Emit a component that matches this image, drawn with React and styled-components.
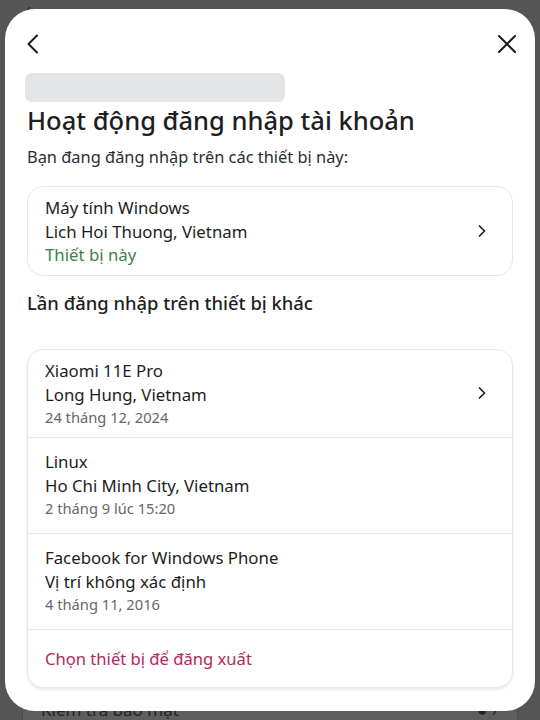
import React from "react";
import styled, { createGlobalStyle } from "styled-components";

const GlobalStyle = createGlobalStyle`
  * { box-sizing: border-box; }
  html, body {
    margin: 0;
    padding: 0;
    background: #585858;
  }
  body {
    font-family: "Noto Sans", Roboto, "Liberation Sans", sans-serif;
    color: #1c1e21;
  }
`;

// page that sits behind the dim overlay
const Backdrop = styled.div`
  position: relative;
  width: 540px;
  height: 720px;
  overflow: hidden;
  background: #555555;
  display: flex;
  flex-direction: column;
  justify-content: space-between;
`;

const BehindTop = styled.div`
  height: 10px;
  padding-left: 22px;
  color: #2a2a2a;
`;

const BehindCard = styled.div`
  margin: 0 22px;
  height: 24px;
  background: #5e5e5e;
  border-left: 1px solid #4c4c4c;
  border-right: 1px solid #4c4c4c;
  display: flex;
  align-items: flex-start;
  justify-content: space-between;
  padding: 0 20px 0 18px;
  font-size: 17px;
  color: #222;
  line-height: 28px;
`;

const Modal = styled.div`
  position: absolute;
  top: 9px;
  left: 5px;
  right: 5px;
  bottom: 9px;
  background: #ffffff;
  border-radius: 30px;
  padding: 0 22px;
  display: flex;
  flex-direction: column;
  overflow: hidden;
`;

const Header = styled.div`
  margin: 23px -6px 0 -6px;
  height: 24px;
  display: flex;
  justify-content: space-between;
  align-items: center;
`;

const IconButton = styled.button`
  width: 24px;
  height: 24px;
  padding: 0;
  border: none;
  background: none;
  display: flex;
  align-items: center;
  justify-content: center;
  color: #1c1e21;
`;

const Placeholder = styled.div`
  margin: 17px 0 0 -2px;
  width: 260px;
  height: 29px;
  border-radius: 7px;
  background: #e4e5e7;
`;

const Title = styled.h1`
  margin: 3px 0 0;
  font-size: 25.5px;
  line-height: 30px;
  font-weight: 500;
`;

const Subtitle = styled.p`
  margin: 11px 0 0;
  font-size: 16.4px;
  line-height: 22px;
  color: #2b2d31;
`;

const SectionTitle = styled.h2`
  margin: 15px 0 0;
  font-size: 18.4px;
  line-height: 24px;
  font-weight: 500;
`;

const Card = styled.div`
  margin-top: ${(p) => p.$gap}px;
  border: 1px solid #e6e7e9;
  border-radius: 16px;
  background: #fff;
  box-shadow: ${(p) => (p.$shadow ? "0 2px 3px rgba(0,0,0,0.08)" : "none")};
  overflow: hidden;
`;

const Row = styled.div`
  display: flex;
  align-items: center;
  justify-content: space-between;
  padding: ${(p) => (p.$compact ? "9px 22px 10px 17px" : "12px 22px 15px 17px")};
  & + & {
    border-top: 1px solid #e6e7e9;
  }
`;

const Info = styled.div`
  display: flex;
  flex-direction: column;
`;

const Line = styled.div`
  font-size: 16.8px;
  line-height: 24px;
  color: #1c1e21;
`;

const Status = styled.div`
  font-size: 16.8px;
  line-height: 21px;
  color: #3f7f4c;
`;

const DateText = styled.div`
  font-size: 14.7px;
  line-height: 20px;
  color: #65676b;
`;

const ActionRow = styled.div`
  border-top: 1px solid #e6e7e9;
  height: 58px;
  padding: 0 17px;
  display: flex;
  align-items: center;
  font-size: 16.6px;
  color: #b22a5a;
`;

const Chevron = () => (
  <svg width="16" height="16" viewBox="0 0 16 16" fill="none">
    <path d="M5.5 3 L10.5 8 L5.5 13" stroke="#1c1e21" strokeWidth="1.7" strokeLinecap="round" strokeLinejoin="round" />
  </svg>
);

const otherDevices = [
  { name: "Xiaomi 11E Pro", place: "Long Hung, Vietnam", date: "24 tháng 12, 2024", arrow: true, compact: true },
  { name: "Linux", place: "Ho Chi Minh City, Vietnam", date: "2 tháng 9 lúc 15:20" },
  { name: "Facebook for Windows Phone", place: "Vị trí không xác định", date: "4 tháng 11, 2016" },
];

export default function App() {
  return (
    <>
      <GlobalStyle />
      <Backdrop>
        <BehindTop>
          <svg width="10" height="10" viewBox="0 0 10 10">
            <path d="M8 0 L2 8" stroke="#2a2a2a" strokeWidth="1.6" />
          </svg>
        </BehindTop>
        <BehindCard>
          <span>Kiểm tra bảo mật</span>
          <span>● ›</span>
        </BehindCard>

        <Modal>
          <Header>
            <IconButton>
              <svg width="24" height="24" viewBox="0 0 24 24" fill="none">
                <path d="M16 3.5 L7.5 12 L16 20.5" stroke="currentColor" strokeWidth="2.1" strokeLinecap="round" strokeLinejoin="round" />
              </svg>
            </IconButton>
            <IconButton>
              <svg width="24" height="24" viewBox="0 0 24 24" fill="none">
                <path d="M4 4 L20 20 M20 4 L4 20" stroke="currentColor" strokeWidth="2.1" strokeLinecap="round" />
              </svg>
            </IconButton>
          </Header>

          <Placeholder />
          <Title>Hoạt động đăng nhập tài khoản</Title>
          <Subtitle>Bạn đang đăng nhập trên các thiết bị này:</Subtitle>

          <Card $gap={18}>
            <Row $compact>
              <Info>
                <Line>Máy tính Windows</Line>
                <Line>Lich Hoi Thuong, Vietnam</Line>
                <Status>Thiết bị này</Status>
              </Info>
              <Chevron />
            </Row>
          </Card>

          <SectionTitle>Lần đăng nhập trên thiết bị khác</SectionTitle>

          <Card $gap={34} $shadow>
            {otherDevices.map((d) => (
              <Row key={d.name} $compact={d.compact}>
                <Info>
                  <Line>{d.name}</Line>
                  <Line>{d.place}</Line>
                  <DateText>{d.date}</DateText>
                </Info>
                {d.arrow && <Chevron />}
              </Row>
            ))}
            <ActionRow>Chọn thiết bị để đăng xuất</ActionRow>
          </Card>
        </Modal>
      </Backdrop>
    </>
  );
}
